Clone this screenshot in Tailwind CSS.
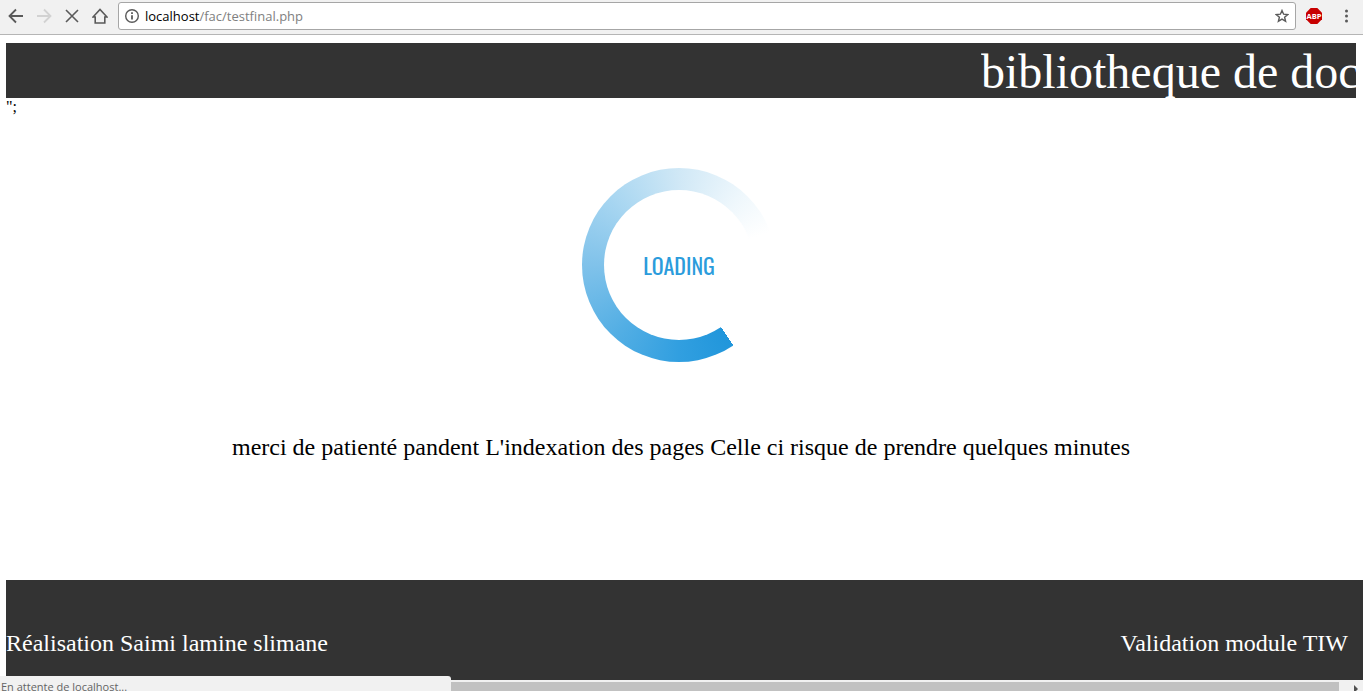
<!DOCTYPE html>
<html lang="fr">
<head>
<meta charset="utf-8">
<meta name="viewport" content="width=device-width, initial-scale=1">
<title>bibliotheque de doc</title>
<script src="https://cdn.jsdelivr.net/npm/@tailwindcss/browser@4"></script>
</head>
<body class="relative flex h-screen flex-col overflow-hidden bg-white font-['Liberation_Serif',serif] text-black">

<!-- Browser toolbar -->
<div class="flex h-[35px] shrink-0 items-center border-b border-[#b5b5b5] bg-[#f1f1f1] pb-[2px] pr-2 pl-2">
  <div class="flex w-[110px] shrink-0 gap-3 text-[#5a5a5a]">
    <button aria-label="Retour" class="size-4"><svg viewBox="0 0 16 16" class="size-4" fill="none" stroke="currentColor" stroke-width="1.8"><path d="M15 8H2M8 1.5L1.5 8L8 14.5"/></svg></button>
    <button aria-label="Avancer" class="size-4 text-[#d2d2d2]"><svg viewBox="0 0 16 16" class="size-4" fill="none" stroke="currentColor" stroke-width="1.8"><path d="M1 8H14M8 1.5L14.5 8L8 14.5"/></svg></button>
    <button aria-label="Arrêter" class="size-4"><svg viewBox="0 0 16 16" class="size-4" fill="none" stroke="currentColor" stroke-width="1.6"><path d="M2 2L14 14M14 2L2 14"/></svg></button>
    <button aria-label="Accueil" class="size-4"><svg viewBox="0 0 16 16" class="size-4" fill="none" stroke="currentColor" stroke-width="1.6"><path d="M3.2 9H1L8 1.4L15 9H12.8V15H3.2Z"/></svg></button>
  </div>
  <div class="flex h-7 grow items-center rounded-[3px] border border-[#a6a6a6] bg-white px-[6px]">
    <svg viewBox="0 0 14 14" class="size-[14px] shrink-0" fill="none" stroke="#5a5a5a"><circle cx="7" cy="7" r="6.3" stroke-width="1.4"/><path d="M7 6.2V10.5M7 3.3V5" stroke-width="1.8"/></svg>
    <a href="#" class="ml-[6px] grow font-['Open_Sans',sans-serif] text-[13px] leading-5 text-[#808080]"><span class="text-black">localhost</span>/fac/testfinal.php</a>
    <button aria-label="Ajouter aux favoris" class="size-[14px]"><svg viewBox="0 0 14 14" class="size-[14px]" fill="none" stroke="#5a5a5a" stroke-width="1.4"><path d="M7 1.5L8.6 5.2L12.8 5.5L9.6 8.2L10.6 12.3L7 10.1L3.4 12.3L4.4 8.2L1.2 5.5L5.4 5.2Z"/></svg></button>
  </div>
  <button aria-label="Adblock Plus" class="ml-[10px] size-4"><svg viewBox="0 0 16 16" class="size-4"><path d="M4.7 0H11.3L16 4.7V11.3L11.3 16H4.7L0 11.3V4.7Z" fill="#c80000"/><text x="8" y="10.8" text-anchor="middle" font-family="Open Sans, sans-serif" font-size="7.5" font-weight="700" fill="#fff">ABP</text></svg></button>
  <button aria-label="Menu" class="ml-[23px] h-4 w-[3px]"><svg viewBox="0 0 3 16" class="h-4 w-[3px]" fill="#5a5a5a"><circle cx="1.5" cy="3" r="1.5"/><circle cx="1.5" cy="8" r="1.5"/><circle cx="1.5" cy="13" r="1.5"/></svg></button>
  <span class="w-[7px]"></span>
</div>

<!-- Page -->
<header class="mt-2 mr-[7px] ml-[6px] shrink-0 bg-[#333333] text-white">
  <h1 class="ml-auto h-[55px] w-[375px] overflow-hidden text-5xl leading-[57px] whitespace-nowrap">bibliotheque de doc</h1>
</header>

<main class="flex grow flex-col pl-[6px]">
  <p class="text-base leading-[18px]">";</p>
  <div class="mt-[52px] mr-[11px] flex size-[194px] items-center justify-center self-center rounded-full bg-[conic-gradient(from_146deg,#2196db_0deg,#319fe0_34deg,#52aee4_75deg,#80c2ea_124deg,#a8d6f1_169deg,#d0e8f6_214deg,#eef7fc_255deg,#ffffff_284deg)]">
    <div class="flex size-[150px] items-center justify-center rounded-full bg-white font-['Oswald','Open_Sans_Condensed','Roboto_Condensed','Liberation_Sans_Narrow',sans-serif] text-[22px] text-[#2b9cdc]">LOADING</div>
  </div>
  <p class="mt-[71px] mr-[7px] text-center text-2xl leading-7">merci de patienté pandent L'indexation des pages Celle ci risque de prendre quelques minutes</p>
</main>

<footer class="ml-[6px] flex h-[100px] shrink-0 justify-between bg-[#333333] pt-[49px] pr-[15px] text-2xl leading-7 text-white">
  <span>Réalisation Saimi lamine slimane</span>
  <span>Validation module TIW</span>
</footer>

<!-- Horizontal scroll bar, cut by the window's lower edge -->
<div class="flex h-[11px] shrink-0 bg-[#f1f1f1] pt-[2px]">
  <div class="grow bg-[#c1c1c1]"></div>
  <div class="flex w-6 justify-end pr-[5px]"><svg viewBox="0 0 4 8" class="mt-[3px] h-2 w-1" fill="#505050"><path d="M0 0L4 4L0 8Z"/></svg></div>
</div>

<!-- Status bubble -->
<div class="absolute bottom-0 left-0 h-[15px] w-[451px] overflow-hidden rounded-tr-[3px] bg-[#f1f1f1] pl-px font-['Open_Sans',sans-serif] text-[11px] leading-[22px] text-[#646464]">En attente de localhost...</div>
</body>
</html>
